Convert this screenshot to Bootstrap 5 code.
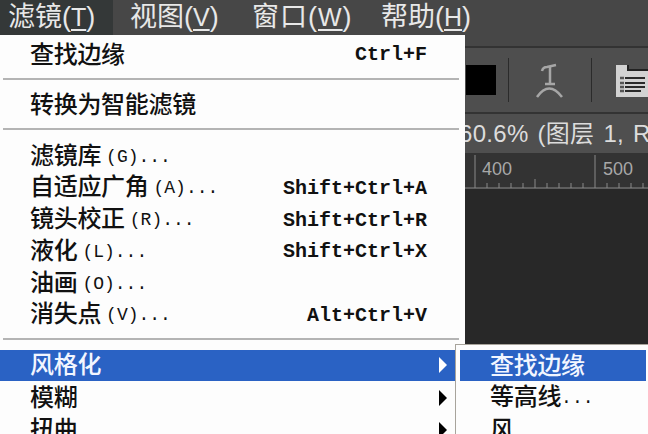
<!DOCTYPE html>
<html lang="zh-CN">
<head>
  <meta charset="UTF-8" />
  <meta name="viewport" content="width=device-width, initial-scale=1.0" />
  <title>滤镜菜单</title>
  <link href="https://cdn.jsdelivr.net/npm/bootstrap@5.3.3/dist/css/bootstrap.min.css" rel="stylesheet" />
  <style>
    html, body { height: 434px; overflow: hidden; }
    body { background: #282828; font-family: "Liberation Mono", "Noto Sans CJK SC", monospace; }
    .ps-app { position: relative; width: 648px; height: 434px; overflow: hidden; }

    /* top menu bar */
    .ps-menubar { height: 35px; background: #474747; color: #e8e8e8; font-family: "Liberation Sans", "Noto Sans CJK SC", sans-serif; font-size: 27px; line-height: 35px; white-space: nowrap; }
    .ps-menubar u { font-size: 25px; text-underline-offset: 3px; }
    .ps-active { width: 113px; padding-left: 8px; background: #343838; }
    .ps-top-view { margin-left: 17px; width: 122px; }
    .ps-top-win { width: 129px; letter-spacing: 1px; }
    .ps-strip { height: 13px; background: #474747; border-bottom: 2px solid #333; }
    .ps-options { height: 66px; background: #4e4e4e; border-bottom: 2px solid #333; padding-left: 466px; }
    .ps-swatch { width: 30px; height: 30px; background: #000; }
    .ps-vline { width: 1px; height: 44px; background: #2b2b2b; margin-left: 12px; }
    .ps-warp { margin-left: 24px; }
    .ps-vline-b { margin-left: 22px; }
    .ps-doc { margin-left: 24px; flex-shrink: 0; }
    .ps-tabbar { height: 39px; background: #4f4f4f; color: #dcdcdc; font-family: "Liberation Sans", "Noto Sans CJK SC", sans-serif; font-size: 24px; line-height: 39px; padding-left: 459px; white-space: nowrap; word-spacing: 2px; letter-spacing: .3px; }
    .ps-ruler { display: block; height: 36px; background: #333; }

    /* dropdown menus */
    .ps-menu.dropdown-menu { display: block; left: 0; top: 35px; width: 465px; height: 399px; padding: 4px 0 0; margin: 0; border: 0; border-radius: 0; background: #fdfdfd; }
    .ps-sub.dropdown-menu { display: block; left: 455px; top: 344px; width: 193px; height: 90px; padding: 5px 2px 0 4px; margin: 0; border: 0; border-left: 1px solid #a8a49c; border-top: 1px solid #a8a49c; border-radius: 0; background: #fdfdfd; }
    .ps-app .dropdown-item { display: flex; justify-content: space-between; align-items: center; height: 32px; line-height: 32px; padding: 0 38px 0 30px; color: #111; font-family: "Liberation Mono", "Noto Sans CJK SC", monospace; font-size: 20px; font-weight: 700; }
    .ps-app .ps-sub .dropdown-item { padding: 0 0 0 30px; }
    .ps-app .ps-row { height: 31.8px; line-height: 31.8px; }
    .ps-cjk { display: inline-block; line-height: 1; padding-top: 4px; vertical-align: -2px; font-size: 24px; font-weight: 500; letter-spacing: -.3px; }
    .ps-key { font-size: 18px; font-weight: 400; margin-left: 5px; }
    .ps-dots { font-size: 18px; font-weight: 400; }
    .ps-app .dropdown-divider { margin: 0 6px 0 3px; border-top: 2px solid #b4b4b4; opacity: 1; }
    .ps-app .dropdown-item.ps-hot { background: #2a62c4; color: #f2f6ff; height: 31px; }
    .ps-app .ps-menu .ps-hot, .ps-app .ps-tail { width: 455px; padding-right: 8px; }
    .ps-arrow { width: 0; height: 0; border-top: 8px solid transparent; border-bottom: 8px solid transparent; border-left: 8px solid #000; }
    .ps-hot .ps-arrow { border-left-color: #fff; }
    .ps-app .ps-sep-a { margin-top: 7px; }
    .ps-app .ps-sep-b { margin-top: 6px; }
    .ps-app .ps-after-a { margin-top: 9px; }
    .ps-app .ps-after-b { margin-top: 11px; }
    .ps-app .ps-after-c { margin-top: 10px; }
    .ps-app .ps-after-d { margin-top: 1px; }
  </style>
</head>
<body>
  <div class="ps-app">
    <div class="ps-menubar d-flex">
      <div class="ps-active">滤镜(<u>T</u>)</div>
      <div class="ps-top-view">视图(<u>V</u>)</div>
      <div class="ps-top-win">窗口(<u>W</u>)</div>
      <div>帮助(<u>H</u>)</div>
    </div>
    <div class="ps-strip"></div>
    <div class="ps-options d-flex align-items-center">
      <div class="ps-swatch"></div>
      <div class="ps-vline"></div>
      <svg class="ps-warp" width="36" height="40" viewBox="0 0 36 40" fill="none" stroke="#a6a6a6" stroke-width="2.5">
        <path d="M9 11q1-4 5-4l9-2"/>
        <path d="M17 6v17M12 24h10"/>
        <path d="M4 37q12-17 25 0"/>
      </svg>
      <div class="ps-vline ps-vline-b"></div>
      <svg class="ps-doc" width="32" height="33" viewBox="0 0 32 33">
        <path d="M0 1h12v6h20v26H0z" fill="#d2d2d2"/>
        <path d="M12 1v5h20" fill="none" stroke="#222" stroke-width="2"/>
        <path d="M9 14h20M9 19h20M9 23h20M9 27h16" stroke="#2a2a2a" stroke-width="2"/>
        <path d="M4 14h4M4 19h4M4 23h4M4 27h4" stroke="#555" stroke-width="2.5"/>
      </svg>
    </div>
    <div class="ps-tabbar">60.6% (图层 1, R</div>
    <svg class="ps-ruler" width="648" height="36" viewBox="0 0 648 36">
      <path d="M465 35H648" stroke="#8a8a8a" stroke-width="1"/>
      <path d="M475 2V35M595 2V35" stroke="#8a8a8a"/>
      <path d="M487 30V35M499 30V35M511 30V35M523 30V35M535 26V35M547 30V35M559 30V35M571 30V35M583 30V35M607 30V35M619 30V35M631 30V35M643 30V35" stroke="#8a8a8a"/>
      <text x="482" y="22" fill="#a8a8a8" font-family="Liberation Sans, sans-serif" font-size="18">400</text>
      <text x="603" y="22" fill="#a8a8a8" font-family="Liberation Sans, sans-serif" font-size="18">500</text>
    </svg>

    <div class="ps-menu dropdown-menu">
      <a class="dropdown-item" href="#"><span class="ps-cjk">查找边缘</span><span>Ctrl+F</span></a>
      <div class="dropdown-divider ps-sep-a"></div>
      <a class="dropdown-item ps-after-a" href="#"><span class="ps-cjk">转换为智能滤镜</span></a>
      <div class="dropdown-divider ps-sep-a"></div>
      <a class="dropdown-item ps-row ps-after-b" href="#"><span><span class="ps-cjk">滤镜库</span><span class="ps-key">(G)...</span></span></a>
      <a class="dropdown-item ps-row" href="#"><span><span class="ps-cjk">自适应广角</span><span class="ps-key">(A)...</span></span><span>Shift+Ctrl+A</span></a>
      <a class="dropdown-item ps-row" href="#"><span><span class="ps-cjk">镜头校正</span><span class="ps-key">(R)...</span></span><span>Shift+Ctrl+R</span></a>
      <a class="dropdown-item ps-row" href="#"><span><span class="ps-cjk">液化</span><span class="ps-key">(L)...</span></span><span>Shift+Ctrl+X</span></a>
      <a class="dropdown-item ps-row" href="#"><span><span class="ps-cjk">油画</span><span class="ps-key">(O)...</span></span></a>
      <a class="dropdown-item ps-row" href="#"><span><span class="ps-cjk">消失点</span><span class="ps-key">(V)...</span></span><span>Alt+Ctrl+V</span></a>
      <div class="dropdown-divider ps-sep-b"></div>
      <a class="dropdown-item ps-hot ps-after-c" href="#"><span class="ps-cjk">风格化</span><span class="ps-arrow"></span></a>
      <a class="dropdown-item ps-tail ps-after-d" href="#"><span class="ps-cjk">模糊</span><span class="ps-arrow"></span></a>
      <a class="dropdown-item ps-tail" href="#"><span class="ps-cjk">扭曲</span><span class="ps-arrow"></span></a>
    </div>

    <div class="ps-sub dropdown-menu">
      <a class="dropdown-item ps-hot" href="#"><span class="ps-cjk">查找边缘</span></a>
      <a class="dropdown-item ps-after-d" href="#"><span><span class="ps-cjk">等高线</span><span class="ps-dots">...</span></span></a>
      <a class="dropdown-item" href="#"><span class="ps-cjk">风</span></a>
    </div>
  </div>
  <script src="https://cdn.jsdelivr.net/npm/bootstrap@5.3.3/dist/js/bootstrap.bundle.min.js"></script>
</body>
</html>
